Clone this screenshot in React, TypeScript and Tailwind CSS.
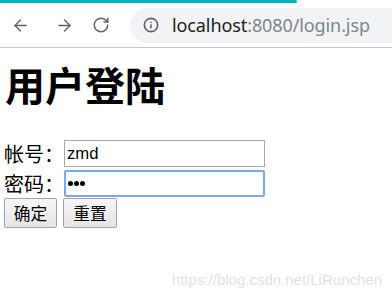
import { ArrowLeft, ArrowRight, RotateCw, Info } from "lucide-react";

const cjk = "font-['Noto_Sans_CJK_SC','Microsoft_YaHei',sans-serif]";

function Toolbar() {
  return (
    <div className="h-[48px] border-b border-[#c8c8c8] bg-white flex flex-col">
      <div className="h-[3px] w-[297px] bg-[#00b5c3] rounded-r-full" />
      <div className="flex-1 flex items-center">
        <div className="flex items-center text-[#5f6368]">
          <ArrowLeft size={19} strokeWidth={1.8} className="ml-[11px]" />
          <ArrowRight size={19} strokeWidth={1.8} className="ml-[25px]" />
          <RotateCw size={18} strokeWidth={2} className="ml-[18px]" />
        </div>
        <div className="ml-[20px] flex-1 h-[35px] bg-[#f1f3f4] rounded-l-full flex items-center font-['Noto_Sans',sans-serif]">
          <Info size={16} strokeWidth={2.4} className="ml-[13px] text-[#5f6368]" />
          <div className="ml-[13px] text-[18px] leading-none tracking-[-0.1px]">
            <span className="text-[#202124]">localhost</span>
            <span className="text-[#80868b]">:8080/login.jsp</span>
          </div>
        </div>
      </div>
    </div>
  );
}

export default function App() {
  return (
    <div className="relative w-[392px] h-[297px] bg-white overflow-hidden">
      <Toolbar />
      <h1 className={`${cjk} mt-[13px] ml-[5px] text-[40px] leading-[46px] font-bold text-black`}>
        用户登陆
      </h1>
      <form className={`${cjk} mt-[33px] flex flex-col text-[20px] text-black`}>
        <div className="flex items-center h-[27px]">
          <label className="w-[64px] pl-[4px] leading-none">帐号：</label>
          <input
            readOnly
            defaultValue="zmd"
            className="w-[201px] h-[27px] border border-[#a9a9a9] px-[2px] text-[16.7px] font-['Liberation_Sans',sans-serif] outline-none"
          />
        </div>
        <div className="flex items-center h-[27px] mt-[3px]">
          <label className="w-[64px] pl-[4px] leading-none">密码：</label>
          <div className="w-[201px] h-[27px] border-2 border-[#7ba7ef] rounded-[2px] pl-[2px] flex items-center gap-[1.5px]">
            <span className="w-[4.5px] h-[4.5px] rounded-full bg-black" />
            <span className="w-[4.5px] h-[4.5px] rounded-full bg-black" />
            <span className="w-[4.5px] h-[4.5px] rounded-full bg-black" />
          </div>
        </div>
        <div className="flex mt-[1px] pl-[4px] gap-[6px]">
          <button
            type="button"
            className="w-[53px] h-[30px] border border-[#a3a3a3] rounded-[2px] bg-gradient-to-b from-[#f6f6f6] to-[#e5e5e5] text-[16.7px] leading-none"
          >
            确定
          </button>
          <button
            type="button"
            className="w-[54px] h-[30px] border border-[#a3a3a3] rounded-[2px] bg-gradient-to-b from-[#f6f6f6] to-[#e5e5e5] text-[16.7px] leading-none"
          >
            重置
          </button>
        </div>
      </form>
      <div className="absolute right-[10px] bottom-[9px] text-[15px] leading-[17px] text-[#e2e2e2] font-['Liberation_Sans',sans-serif]">
        https://blog.csdn.net/LiRunchen
      </div>
    </div>
  );
}
